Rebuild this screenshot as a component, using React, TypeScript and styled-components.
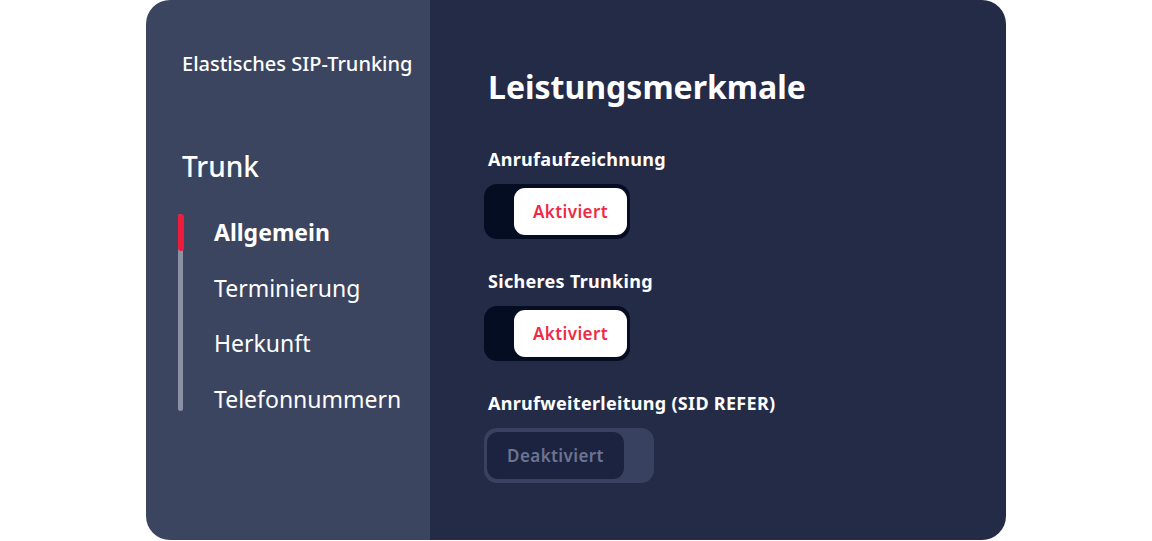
import React from 'react';
import styled, { createGlobalStyle } from 'styled-components';

const GlobalStyle = createGlobalStyle`
  html, body {
    margin: 0;
    padding: 0;
    background: #ffffff;
  }
  body {
    font-family: "Noto Sans", "Open Sans", sans-serif;
  }
`;

const Page = styled.div`
  width: 1152px;
  height: 541px;
  display: flex;
  justify-content: center;
  align-items: flex-start;
`;

const Card = styled.div`
  width: 860px;
  height: 540px;
  display: flex;
  border-radius: 24px;
  overflow: hidden;
`;

const SidePanel = styled.aside`
  width: 284px;
  background: #3b4560;
  padding: 50px 0 0 36px;
  box-sizing: border-box;
  color: #ffffff;
`;

const Product = styled.div`
  font-size: 20px;
  font-weight: 500;
`;

const Section = styled.div`
  margin-top: 70px;
  font-size: 28px;
  font-weight: 500;
`;

const NavList = styled.nav`
  position: relative;
  margin-top: 28px;
  display: flex;
  flex-direction: column;
  gap: 17.5px;
  padding-left: 32px;

  &::before {
    content: '';
    position: absolute;
    left: -4px;
    top: 1px;
    bottom: 7px;
    width: 5px;
    border-radius: 3px;
    background: #8a91a4;
  }
`;

const NavItem = styled.a<{ $active?: boolean }>`
  position: relative;
  font-size: 23px;
  line-height: 38px;
  color: #ffffff;
  font-weight: ${(p) => (p.$active ? 700 : 400)};
  text-decoration: none;

  &::before {
    content: '';
    display: ${(p) => (p.$active ? 'block' : 'none')};
    position: absolute;
    left: -36px;
    top: 1px;
    width: 6px;
    height: 37px;
    border-radius: 3px;
    background: #ee1c3a;
  }
`;

const Main = styled.main`
  flex: 1;
  background: #242b47;
  padding: 65px 0 0 58px;
  box-sizing: border-box;
  color: #ffffff;
`;

const Heading = styled.h1`
  margin: 0 0 39px;
  font-size: 32px;
  font-weight: 700;
`;

const Feature = styled.div`
  display: flex;
  flex-direction: column;
  align-items: flex-start;
  margin-bottom: 30px;
`;

const Label = styled.div`
  font-size: 18px;
  font-weight: 700;
  line-height: 24px;
  letter-spacing: 0.3px;
  margin-bottom: 13px;
`;

const Track = styled.div<{ $on: boolean }>`
  display: flex;
  justify-content: ${(p) => (p.$on ? 'flex-end' : 'flex-start')};
  box-sizing: border-box;
  width: ${(p) => (p.$on ? 146 : 170)}px;
  height: 55px;
  margin-left: -4px;
  padding: 4px 3px;
  border-radius: 13px;
  background: ${(p) => (p.$on ? '#050d22' : '#394160')};
`;

const Knob = styled.button<{ $on: boolean }>`
  width: ${(p) => (p.$on ? 113 : 137)}px;
  height: 47px;
  border: none;
  border-radius: 11px;
  background: ${(p) => (p.$on ? '#ffffff' : '#1c2340')};
  color: ${(p) => (p.$on ? '#ef2a45' : '#6d7491')};
  font-family: inherit;
  font-size: 17px;
  font-weight: 600;
  letter-spacing: 0.4px;
  cursor: pointer;
`;

const features = [
  { label: 'Anrufaufzeichnung', on: true },
  { label: 'Sicheres Trunking', on: true },
  { label: 'Anrufweiterleitung (SID REFER)', on: false },
];

const navItems = ['Allgemein', 'Terminierung', 'Herkunft', 'Telefonnummern'];

export default function App() {
  return (
    <>
      <GlobalStyle />
      <Page>
        <Card>
          <SidePanel>
            <Product>Elastisches SIP-Trunking</Product>
            <Section>Trunk</Section>
            <NavList>
              {navItems.map((item, i) => (
                <NavItem key={item} $active={i === 0}>
                  {item}
                </NavItem>
              ))}
            </NavList>
          </SidePanel>
          <Main>
            <Heading>Leistungsmerkmale</Heading>
            {features.map((f) => (
              <Feature key={f.label}>
                <Label>{f.label}</Label>
                <Track $on={f.on}>
                  <Knob $on={f.on}>{f.on ? 'Aktiviert' : 'Deaktiviert'}</Knob>
                </Track>
              </Feature>
            ))}
          </Main>
        </Card>
      </Page>
    </>
  );
}
